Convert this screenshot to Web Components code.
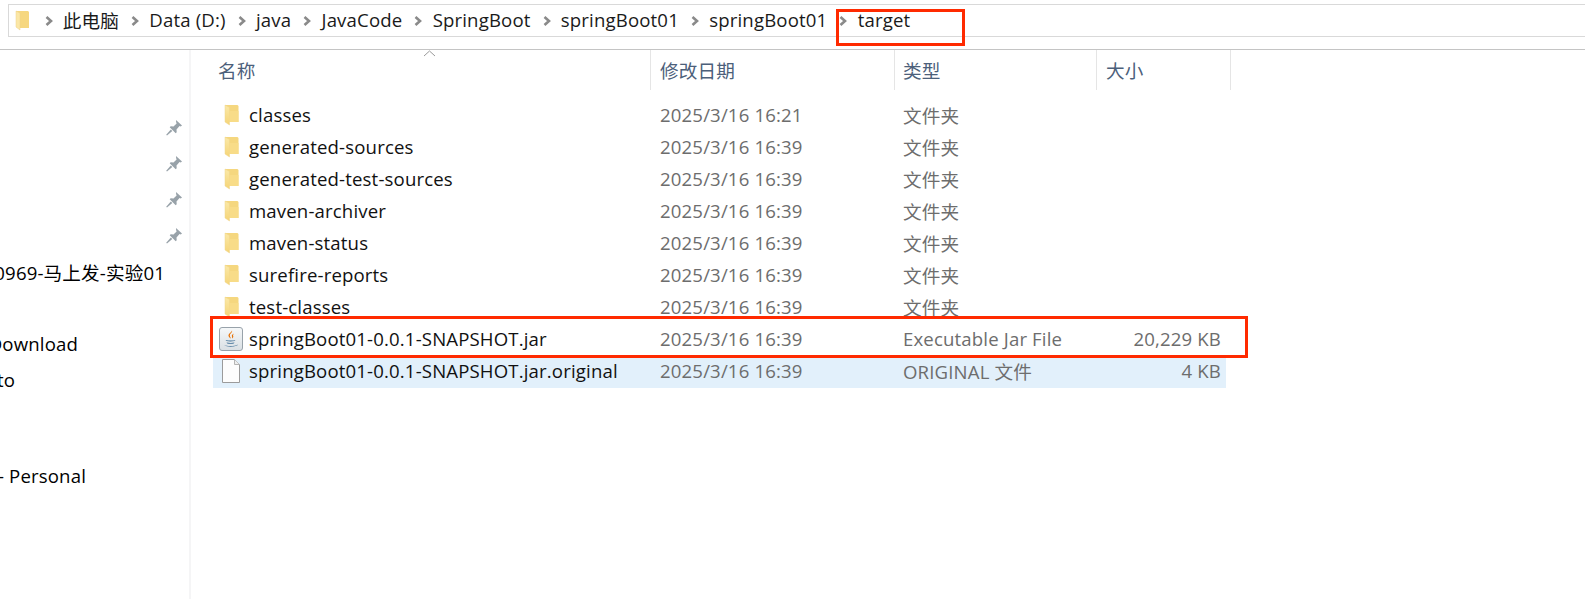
<!DOCTYPE html>
<html>
<head>
<meta charset="utf-8">
<title>target</title>
<style>
  html, body { margin: 0; background: #fff; }
  body { font-family: "Open Sans", "Noto Sans CJK SC", sans-serif; font-size: 18.6px; letter-spacing: .15px; overflow: hidden; }
</style>
</head>
<body>
<file-explorer>
  <address-bar slot="address">
    <bread-crumb>此电脑</bread-crumb>
    <bread-crumb>Data (D:)</bread-crumb>
    <bread-crumb>java</bread-crumb>
    <bread-crumb>JavaCode</bread-crumb>
    <bread-crumb>SpringBoot</bread-crumb>
    <bread-crumb>springBoot01</bread-crumb>
    <bread-crumb>springBoot01</bread-crumb>
    <bread-crumb>target</bread-crumb>
  </address-bar>
  <nav-pane slot="nav">
    <nav-item pinned></nav-item>
    <nav-item pinned></nav-item>
    <nav-item pinned></nav-item>
    <nav-item pinned></nav-item>
    <nav-item end="165">0969-马上发-实验01</nav-item>
    <nav-item></nav-item>
    <nav-item end="78">Download</nav-item>
    <nav-item end="15">to</nav-item>
    <nav-item spacer></nav-item>
    <nav-item end="86">- Personal</nav-item>
  </nav-pane>
  <file-list slot="files">
    <file-row icon="folder" name="classes" date="2025/3/16 16:21" type="文件夹"></file-row>
    <file-row icon="folder" name="generated-sources" date="2025/3/16 16:39" type="文件夹"></file-row>
    <file-row icon="folder" name="generated-test-sources" date="2025/3/16 16:39" type="文件夹"></file-row>
    <file-row icon="folder" name="maven-archiver" date="2025/3/16 16:39" type="文件夹"></file-row>
    <file-row icon="folder" name="maven-status" date="2025/3/16 16:39" type="文件夹"></file-row>
    <file-row icon="folder" name="surefire-reports" date="2025/3/16 16:39" type="文件夹"></file-row>
    <file-row icon="folder" name="test-classes" date="2025/3/16 16:39" type="文件夹"></file-row>
    <file-row icon="jar" name="springBoot01-0.0.1-SNAPSHOT.jar" date="2025/3/16 16:39" type="Executable Jar File" size="20,229 KB"></file-row>
    <file-row icon="doc" selected name="springBoot01-0.0.1-SNAPSHOT.jar.original" date="2025/3/16 16:39" type="ORIGINAL 文件" size="4 KB"></file-row>
  </file-list>
</file-explorer>

<script>
const FOLDER_SVG = `<svg width="15" height="22" viewBox="0 0 15 22">
  <defs><linearGradient id="f" x1="0" y1="0" x2="0" y2="1"><stop offset="0" stop-color="#fbe9a8"/><stop offset="1" stop-color="#f5d476"/></linearGradient></defs>
  <path d="M1 1h12.500l1 1v16H5L1 17z" fill="#f5d77f"/>
  <path d="M1 1l4.500 2.500V21L1 18z" fill="url(#f)" stroke="#eed48c" stroke-width=".5"/>
  <path d="M5.500 7h9v11h-9z" fill="#f8dc88"/>
</svg>`;

const JAR_SVG = `<svg width="24" height="24" viewBox="0 0 24 24">
  <defs><linearGradient id="j" x1="0" y1="0" x2="0" y2="1"><stop offset="0" stop-color="#f6f8f9"/><stop offset="1" stop-color="#d9dfe4"/></linearGradient></defs>
  <rect x=".5" y=".5" width="23" height="23" rx="2.500" fill="url(#j)" stroke="#98a2aa"/>
  <path d="M13 3.500c1 2-3 3-2 6 .3 1 1 1.400 1 2-1-.5-3-2-2.500-3.500C10 6 12.500 5.500 13 3.500z" fill="#e76f00"/>
  <path d="M15 6.500c-2 1-2.500 2-2 3 .2.600.2 1 0 2 1.500-1 1.500-2 1-3 0-.8.400-1.300 1-2z" fill="#e76f00"/>
  <path d="M6.500 13c3 .7 8 .7 10 0l-1 1c-2.500.5-6 .5-8 0zM7.500 15.500c2.500.5 6 .5 8 0l-.8.900c-2 .4-4.500.4-6.400 0z" fill="#3f6f96"/>
  <path d="M5 18c3 1.400 11 1.400 14-.5-1 2.500-11 3-14 .5z" fill="#3f6f96"/>
</svg>`;

const DOC_SVG = `<svg width="18" height="24" viewBox="0 0 18 24">
  <path d="M.5.500h12l5 5v18H.5z" fill="#fdfdfd" stroke="#9b9b9b"/>
  <path d="M12.500.500v5h5" fill="#eee" stroke="#b5b5b5"/>
</svg>`;

const PIN_SVG = `<svg width="16" height="16" viewBox="0 0 16 16">
  <path d="M10 0l6 5.500-1.300 1-1.200-.4-3 3.400.2 2.700-1 1-6-6 1-1 2.800.2 3.100-3-.5-1.400z" fill="#98a2a9"/>
  <path d="M4.800 9.600l1.500 1.500-5.300 4.500-.8-.8z" fill="#98a2a9"/>
</svg>`;

// small helper so each element only has to give its markup
class ShadowEl extends HTMLElement {
  render(html) {
    if (!this.shadowRoot) this.attachShadow({ mode: 'open' });
    this.shadowRoot.innerHTML = html;
  }
}

class FileExplorer extends ShadowEl {
  connectedCallback() {
    this.render(`
      <style>
        :host { display: flex; flex-direction: column; position: relative; width: 1585px; height: 599px; overflow: hidden; color: #000; }
        .top { height: 50px; flex: none; box-sizing: border-box; border-bottom: 1px solid #c4c4c4; padding: 4px 0 0 8px; }
        .main { display: flex; flex: 1; min-height: 0; }
        .mark { position: absolute; border: 3px solid #ff2a00; box-sizing: border-box; }
        .mark.path { left: 836px; top: 9px; width: 129px; height: 37px; }
        .mark.jar { left: 210px; top: 316px; width: 1038px; height: 42px; }
      </style>
      <div class="top"><slot name="address"></slot></div>
      <div class="main">
        <slot name="nav"></slot>
        <slot name="files"></slot>
      </div>
      <div class="mark path"></div>
      <div class="mark jar"></div>
    `);
  }
}

class AddressBar extends ShadowEl {
  connectedCallback() {
    this.render(`
      <style>
        :host { display: flex; align-items: center; height: 33px; box-sizing: border-box; border: 1px solid #d9d9d9; border-right: 0; padding-left: 6px; color: #1a1a1a; }
        .home { display: flex; margin-right: 2.5px; }
      </style>
      <span class="home"><svg width="15" height="21" viewBox="0 0 15 21">
        <path d="M1 1h12l1 1v16H5L1 17z" fill="#f6d77f"/>
        <path d="M1 1l4 2v17l-4-3z" fill="#fbe7a6" stroke="#ecd188" stroke-width=".5"/>
      </svg></span>
      <slot></slot>
    `);
  }
}

class BreadCrumb extends ShadowEl {
  connectedCallback() {
    this.render(`
      <style>
        :host { display: inline-flex; align-items: center; white-space: nowrap; padding-bottom: 2px; }
        svg { margin: 2px 10.3px 0 12px; flex: none; }
      </style>
      <svg width="8" height="10" viewBox="0 0 8 10"><path d="M1.500 1l4.500 4-4.500 4" fill="none" stroke="#8a8a8a" stroke-width="2.600"/></svg>
      <slot></slot>
    `);
  }
}

class NavPane extends ShadowEl {
  connectedCallback() {
    this.render(`
      <style>
        :host { display: flex; flex-direction: column; flex: none; box-sizing: border-box; width: 191px; height: 100%; padding-top: 60px; border-right: 2px solid #f5f5f6; overflow: hidden; }
      </style>
      <slot></slot>
    `);
  }
}

class NavItem extends ShadowEl {
  connectedCallback() {
    const pinned = this.hasAttribute('pinned');
    this.render(`
      <style>
        :host { display: flex; align-items: center; justify-content: flex-end; height: 36px; flex: none; white-space: nowrap; box-sizing: border-box; }
        :host([end]) { padding-bottom: 2px; }
        :host([spacer]) { height: 60px; }
        .pin { display: flex; margin-right: 7px; }
      </style>
      ${pinned ? `<span class="pin">${PIN_SVG}</span>` : ''}
      <slot></slot>
    `);
    // the pane is scrolled sideways in the shot: text is right-aligned to where it ends and clips on the left
    const end = this.getAttribute('end');
    if (end) this.style.paddingRight = (189 - end) + 'px';
  }
}

class FileList extends ShadowEl {
  connectedCallback() {
    this.render(`
      <style>
        :host { display: block; flex: 1; min-width: 0; padding-left: 22px; }
        .head { display: flex; height: 40px; color: #4c607a; }
        .head > div { display: flex; align-items: center; box-sizing: border-box; border-right: 1px solid #e5e5e5; padding-bottom: 2px; position: relative; }
        .name { width: 438px; padding-left: 5px; }
        .date { width: 244px; padding-left: 9px; }
        .type { width: 202px; padding-left: 8px; }
        .size { width: 134px; padding-left: 9px; }
        .caret { position: absolute; left: 210px; top: 0; }
        .rows { margin-top: 9px; }
      </style>
      <div class="head">
        <div class="name">名称<svg class="caret" width="13" height="7" viewBox="0 0 13 7"><path d="M1 6l5.500-5 5.500 5" fill="none" stroke="#9a9a9a"/></svg></div>
        <div class="date">修改日期</div>
        <div class="type">类型</div>
        <div class="size">大小</div>
      </div>
      <div class="rows"><slot></slot></div>
    `);
  }
}

class FileRow extends ShadowEl {
  connectedCallback() {
    const icons = { folder: FOLDER_SVG, jar: JAR_SVG, doc: DOC_SVG };
    const a = n => this.getAttribute(n) || '';
    this.render(`
      <style>
        :host { display: flex; align-items: center; height: 32px; width: 1013px; box-sizing: border-box; padding-bottom: 2px; white-space: nowrap; color: #6d6d6d; }
        :host([selected]) { background: #e2f0fb; box-shadow: 0 1px 0 #e2f0fb; }
        .icon { display: flex; justify-content: center; width: 36px; flex: none; margin-top: 2px; }
        .name { width: 411px; flex: none; color: #111; }
        .date { width: 243px; flex: none; }
        .type { width: 180px; flex: none; }
        .size { width: 138px; flex: none; text-align: right; }
      </style>
      <span class="icon">${icons[a('icon')]}</span>
      <span class="name">${a('name')}</span>
      <span class="date">${a('date')}</span>
      <span class="type">${a('type')}</span>
      <span class="size">${a('size')}</span>
    `);
  }
}

customElements.define('file-explorer', FileExplorer);
customElements.define('address-bar', AddressBar);
customElements.define('bread-crumb', BreadCrumb);
customElements.define('nav-pane', NavPane);
customElements.define('nav-item', NavItem);
customElements.define('file-list', FileList);
customElements.define('file-row', FileRow);
</script>
</body>
</html>
